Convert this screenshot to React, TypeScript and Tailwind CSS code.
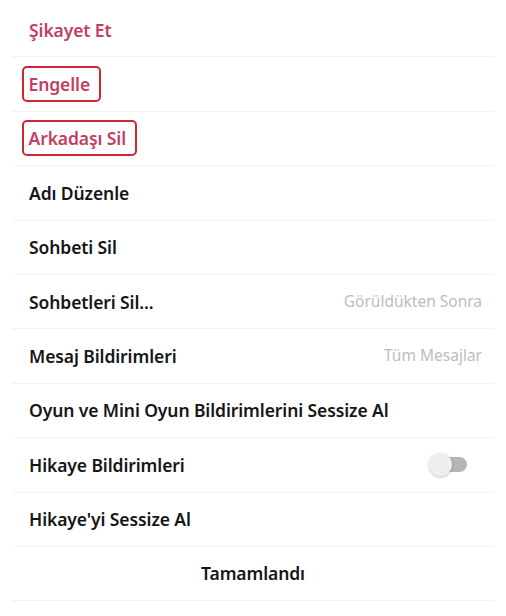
import React from "react";

type Row = {
  label: string;
  red?: boolean;
  boxed?: boolean;
  right?: string;
  toggle?: boolean;
};

const rows: Row[] = [
  { label: "Şikayet Et", red: true },
  { label: "Engelle", red: true, boxed: true },
  { label: "Arkadaşı Sil", red: true, boxed: true },
  { label: "Adı Düzenle" },
  { label: "Sohbeti Sil" },
  { label: "Sohbetleri Sil...", right: "Görüldükten Sonra" },
  { label: "Mesaj Bildirimleri", right: "Tüm Mesajlar" },
  { label: "Oyun ve Mini Oyun Bildirimlerini Sessize Al" },
  { label: "Hikaye Bildirimleri", toggle: true },
  { label: "Hikaye'yi Sessize Al" },
];

export default function App() {
  return (
    <div
      className="w-[506px] h-[616px] bg-white overflow-hidden pt-[3px]"
      style={{ fontFamily: '"Noto Sans", "Open Sans", sans-serif' }}
    >
      {rows.map((r, i) => (
        <div
          key={i}
          className="h-[54.4px] mx-[12px] border-b border-[#f3f3f3] flex items-center justify-between pl-[17px] pr-[12px]"
        >
          <div
            className={
              r.boxed
                ? "-ml-[7px] pl-[4.5px] pr-[9px] h-[36px] flex items-center rounded-[5px] border-[2.5px] border-[#cf2632]"
                : ""
            }
          >
            <span
              className={
                "text-[17.5px] font-semibold tracking-[-0.1px] " +
                (r.red ? "text-[#c23f60]" : "text-[#161616]")
              }
            >
              {r.label}
            </span>
          </div>
          {r.right && (
            <span className="text-[15.5px] text-[#bdbdbd]">{r.right}</span>
          )}
          {r.toggle && (
            <div className="relative w-[38px] h-[23px] mr-[15px]">
              <div className="absolute right-0 top-[4px] w-[26px] h-[15px] rounded-full bg-[#b5b5b5]" />
              <div className="absolute left-0 top-0 w-[23px] h-[23px] rounded-full bg-[#efefef] shadow-[0_1px_3px_rgba(0,0,0,0.25)]" />
            </div>
          )}
        </div>
      ))}
      <div className="h-[54px] mx-[12px] border-b border-[#f3f3f3] flex items-center justify-center">
        <span className="text-[17.5px] font-semibold tracking-[-0.1px] text-[#161616]">Tamamlandı</span>
      </div>
    </div>
  );
}
